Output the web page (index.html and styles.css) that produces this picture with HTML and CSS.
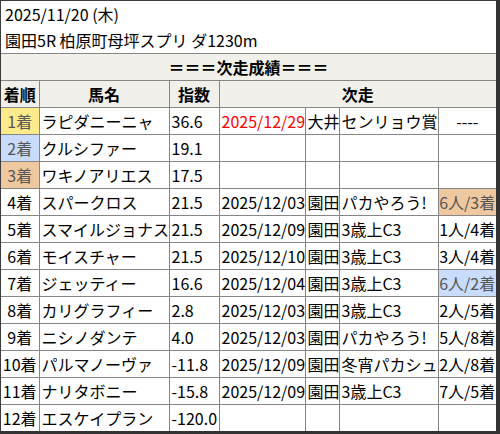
FILE: index.html
```html
<!DOCTYPE html>
<html lang="ja">
<head>
<meta charset="utf-8">
<link rel="stylesheet" href="styles.css">
</head>
<body>
<div class="frame">
  <div class="info">
    <div class="line">2025/11/20 (木)</div>
    <div class="line">園田5R 柏原町母坪スプリ ダ1230m</div>
  </div>
  <table class="tbl">
    <colgroup>
      <col class="c1"><col class="c2"><col class="c3"><col class="c4"><col class="c5"><col class="c6"><col class="c7">
    </colgroup>
    <tr class="head"><th colspan="7">＝＝＝次走成績＝＝＝</th></tr>
    <tr class="head"><th>着順</th><th>馬名</th><th>指数</th><th colspan="4">次走</th></tr>
    <tr><td class="rank gold">1着</td><td>ラピダニーニャ</td><td>36.6</td><td class="red">2025/12/29</td><td>大井</td><td>センリョウ賞</td><td class="res">----</td></tr>
    <tr><td class="rank silver">2着</td><td>クルシファー</td><td>19.1</td><td></td><td></td><td></td><td></td></tr>
    <tr><td class="rank bronze">3着</td><td>ワキノアリエス</td><td>17.5</td><td></td><td></td><td></td><td></td></tr>
    <tr><td class="rank">4着</td><td>スパークロス</td><td>21.5</td><td>2025/12/03</td><td>園田</td><td>パカやろう!</td><td class="res bronze">6人/3着</td></tr>
    <tr><td class="rank">5着</td><td>スマイルジョナス</td><td>21.5</td><td>2025/12/09</td><td>園田</td><td>3歳上C3</td><td class="res">1人/4着</td></tr>
    <tr><td class="rank">6着</td><td>モイスチャー</td><td>21.5</td><td>2025/12/10</td><td>園田</td><td>3歳上C3</td><td class="res">3人/4着</td></tr>
    <tr><td class="rank">7着</td><td>ジェッティー</td><td>16.6</td><td>2025/12/04</td><td>園田</td><td>3歳上C3</td><td class="res silver">6人/2着</td></tr>
    <tr><td class="rank">8着</td><td>カリグラフィー</td><td>2.8</td><td>2025/12/03</td><td>園田</td><td>3歳上C3</td><td class="res">2人/5着</td></tr>
    <tr><td class="rank">9着</td><td>ニシノダンテ</td><td>4.0</td><td>2025/12/03</td><td>園田</td><td>パカやろう!</td><td class="res">5人/8着</td></tr>
    <tr><td class="rank">10着</td><td>パルマノーヴァ</td><td>-11.8</td><td>2025/12/09</td><td>園田</td><td>冬宵パカシュ</td><td class="res">2人/8着</td></tr>
    <tr><td class="rank">11着</td><td>ナリタボニー</td><td>-15.8</td><td>2025/12/09</td><td>園田</td><td>3歳上C3</td><td class="res">7人/5着</td></tr>
    <tr><td class="rank">12着</td><td>エスケイプラン</td><td>-120.0</td><td></td><td></td><td></td><td></td></tr>
  </table>
</div>
</body>
</html>
```
FILE: styles.css
```css
html, body {
  margin: 0;
  padding: 0;
  background: #ffffff;
}
body {
  font-family: "Noto Sans CJK JP", "Noto Sans", sans-serif;
  font-size: 16px;
  color: #000;
}
.frame {
  box-sizing: border-box;
  width: 500px;
  height: 434px;
  border-left: 1px solid #3c3c3c;
  border-top: 1px solid #3c3c3c;
  border-right: 4px solid #333;
  border-bottom: 3px solid #333;
  overflow: hidden;
}
.info {
  height: 52px;
  padding-left: 4px;
}
.line {
  height: 26px;
  line-height: 26px;
  white-space: nowrap;
}
.tbl {
  width: 495px;
  table-layout: fixed;
  border-collapse: collapse;
  border-left: hidden;
  border-right: hidden;
}
.c1 { width: 38px; }
.c2 { width: 130px; }
.c3 { width: 50px; }
.c4 { width: 86px; }
.c5 { width: 34px; }
.c6 { width: 99px; }
.c7 { width: 58px; }
.tbl th, .tbl td {
  border: 1px solid #868686;
  height: 26px;
  padding: 0 0 0 2px;
  line-height: 26px;
  white-space: nowrap;
  overflow: hidden;
  text-align: left;
}
.tbl th {
  background: #f2f0eb;
  font-weight: bold;
  text-align: center;
  padding: 0;
}
.tbl td.rank {
  text-align: center;
  padding: 0;
}
.tbl td.res {
  text-align: center;
  padding: 0;
}
.gold { background: #fdeb8c; color: #555; }
.silver { background: #cadcfc; color: #555; }
.bronze { background: #f0c8a0; color: #555; }
.red { color: #ff0000; }
```
